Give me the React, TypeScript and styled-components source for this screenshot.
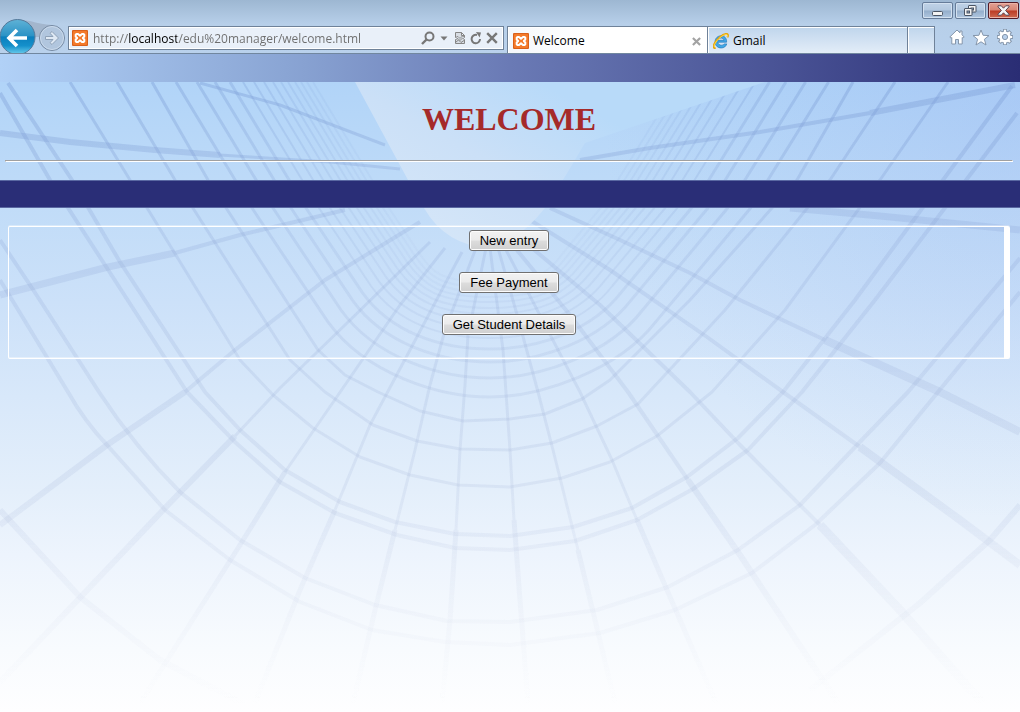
import React from 'react';
import styled, { createGlobalStyle, css } from 'styled-components';

const uiFont = '"Open Sans", "Noto Sans", sans-serif';

const GlobalStyle = createGlobalStyle`
  *, *::before, *::after { box-sizing: border-box; }
  html, body { margin: 0; padding: 0; }
  body { background: #fdfdff; font-family: "Liberation Serif", serif; }
`;

const Window = styled.div`
  display: flex;
  flex-direction: column;
  min-height: 100vh;
`;

/* ---------- browser frame ---------- */

const Frame = styled.header`
  display: flex;
  flex-direction: column;
  background: linear-gradient(#9db7d2 0, #b7cfe9 24px, #b9d1ec 100%);
  border-bottom: 1px solid #71879f;
  font-family: ${uiFont};
`;

const TitleBar = styled.div`
  display: flex;
  justify-content: flex-end;
  gap: 2px;
  height: 19px;
  padding: 2px 1px 0 0;
`;

const WindowButton = styled.button<{ $danger?: boolean }>`
  display: flex;
  align-items: center;
  justify-content: center;
  width: 31px;
  height: 17px;
  padding: 0;
  border: 1px solid ${(p) => (p.$danger ? '#521a26' : '#667c99')};
  border-radius: 2px;
  box-shadow: inset 0 0 0 1px ${(p) => (p.$danger ? '#eab3a8' : '#d3e1f0')};
  background: ${(p) =>
    p.$danger
      ? 'linear-gradient(#e3a194 0, #d88473 48%, #bb3a24 52%, #cd6a50 100%)'
      : 'linear-gradient(#bfd2e7 0, #b3c8df 48%, #94aecb 52%, #b0c7e0 100%)'};
`;

const Toolbar = styled.div`
  display: flex;
  height: 34px;
  overflow: hidden;
`;

const HistoryButtons = styled.nav`
  display: flex;
  width: 68px;
`;

const RoundButton = styled.button`
  padding: 0;
  border: 0;
  background: none;
  line-height: 0;
`;

const BackButton = styled(RoundButton)`
  z-index: 1;
  width: 36px;
  height: 36px;
`;

const ForwardButton = styled(RoundButton)`
  width: 30px;
  height: 34px;
`;

const AddressBar = styled.form`
  display: flex;
  flex: 1;
  align-items: center;
  min-width: 0;
  height: 24px;
  margin: 7px 3px 0 0;
  padding: 0 3px;
  border: 1px solid #6f8299;
  box-shadow: inset 0 0 0 1px #fff;
  background: #e9f0f9;
`;

const AddressInput = styled.input`
  flex: 1;
  min-width: 0;
  height: 20px;
  margin-left: 5px;
  padding: 0;
  border: 0;
  outline: 0;
  font: 12px/16px ${uiFont};
  color: transparent;
  background: linear-gradient(90deg, #6d6d6d 35px, #000 35px, #000 84px, #6d6d6d 84px);
  background-clip: text;
  -webkit-background-clip: text;
`;

const PlainButton = styled.button`
  display: flex;
  align-items: center;
  justify-content: center;
  width: 16px;
  height: 20px;
  padding: 0;
  border: 0;
  background: none;
`;

const TabList = styled.div`
  display: flex;
  height: 27px;
  margin-top: 7px;
  border-top: 1px solid #6f8299;
  border-left: 1px solid #6f8299;
`;

const tabFace = css<{ $active?: boolean }>`
  border: 0;
  border-right: 1px solid #6f8299;
  box-shadow: inset 1px 1px 0 #fff;
  background: ${(p) =>
    p.$active ? 'linear-gradient(90deg, #f4f7fb, #fff 40%)' : 'linear-gradient(#bfd5ec, #e3edf8)'};
`;

const Tab = styled.div<{ $active?: boolean }>`
  display: flex;
  align-items: center;
  width: 200px;
  padding: 2px 3px 0 5px;
  ${tabFace}
`;

const TabLabel = styled.button`
  display: flex;
  flex: 1;
  align-items: center;
  gap: 4px;
  padding: 0;
  border: 0;
  background: none;
  font: 12px/16px ${uiFont};
  color: #000;
`;

const NewTab = styled.button`
  width: 27px;
  padding: 0;
  ${tabFace}
`;

const Tools = styled.div`
  display: flex;
  align-items: center;
  gap: 4px;
  padding: 2px 5px 0 12px;
`;

const ToolButton = styled(PlainButton)`
  width: 20px;
`;

/* ---------- page ---------- */

const Page = styled.div`
  display: grid;
  flex: 1;
  > * { grid-area: 1 / 1; }
`;

const Backdrop = styled.svg`
  display: block;
  width: 100%;
  height: 100%;
  min-height: 0;
`;

const Content = styled.div`
  z-index: 1;
`;

const TopStrip = styled.div`
  height: 28px;
  background: linear-gradient(90deg, #b1d1f7 0, #8aa5d4 28%, #6a7ab5 50%, #4b5597 75%, #2a2d74 100%);
`;

const Heading = styled.div`
  padding: 19px 7px 18px 5px;
`;

const Title = styled.h1`
  margin: 0;
  font: bold 32px/36px "Liberation Serif", serif;
  text-align: center;
  color: #a52a2a;
`;

const Rule = styled.hr`
  height: 2px;
  margin: 23px 0 0;
  border: 1px solid;
  border-color: #a0a0a0 #fff #fff #a0a0a0;
`;

const Band = styled.div`
  height: 28px;
  border: solid #5a68a2;
  border-width: 1px 0;
  background: #2a2e77;
`;

const Menu = styled.main`
  display: flex;
  flex-direction: column;
  align-items: center;
  gap: 21px;
  margin: 18px 10px 0 8px;
  padding: 3px 0 23px 5px;
  border: 1px solid #fff;
  border-right-width: 6px;
  border-radius: 2px;
  box-shadow: 0 -1px 0 rgba(255, 255, 255, 0.35), inset 0 -1px 0 rgba(255, 255, 255, 0.4);
`;

const MenuButton = styled.button`
  height: 21px;
  padding: 0 10px;
  border: 1px solid #707070;
  border-radius: 3px;
  box-shadow: inset 0 0 0 1px #fcfcfc;
  background: linear-gradient(#f2f2f2 0, #ebebeb 49%, #dddddd 51%, #cfcfcf 100%);
  font: 13px/19px "Liberation Sans", Arial, sans-serif;
  color: #000;
`;

/* ---------- icons ---------- */

const XamppIcon = () => (
  <svg width="16" height="16" viewBox="0 0 16 16" aria-hidden="true">
    <rect width="16" height="16" rx="1" fill="#d9601a" />
    <rect x="1" y="1" width="14" height="14" rx="1" fill="#f47a2a" />
    <path
      d="M4.500 4H6L8 5.800 10 4h1.500l.8.8v1.700L10.800 8l1.500 1.500v1.700l-.8.8H10L8 10.200 6 12H4.500l-.8-.8V9.500L5.200 8 3.700 6.500V4.800z"
      fill="none"
      stroke="#fff"
      strokeWidth="2"
      strokeLinejoin="round"
    />
    <path d="M6.500 8h3" stroke="#f47a2a" strokeWidth="1.400" />
  </svg>
);

const ExplorerIcon = () => (
  <svg width="16" height="16" viewBox="0 0 16 16" aria-hidden="true">
    <path
      d="M13.600 9.200H4.900c.2 1.900 1.600 3 3.500 3 1.300 0 2.300-.4 2.900-1.300h2.500C12.900 13.500 11 15 8.300 15 4.700 15 2 12.500 2 8.900 2 5.400 4.600 2.800 8.200 2.800c3.400 0 5.700 2.500 5.400 6.400zM4.900 7.300h6c-.2-1.500-1.300-2.300-2.800-2.300-1.700 0-2.900.8-3.200 2.300z"
      fill="#41a8e6"
      stroke="#1b6fb5"
      strokeWidth=".6"
    />
    <path
      d="M2.600 14.800C.4 15.600 0 13.400 1.700 10.300 4 6 9.400 1.300 13 .9c2.100-.2 2.500 1.400 1.400 3.500"
      fill="none"
      stroke="#e5a50c"
      strokeWidth="1.900"
    />
    <path
      d="M2.200 14.200C.9 14.200.9 12.500 2.100 10.500 4.400 6.400 9.500 1.900 13 1.400c1.500-.1 1.900.9 1.200 2.500"
      fill="none"
      stroke="#ffd84a"
      strokeWidth="1"
    />
  </svg>
);

const BackIcon = () => (
  <svg width="36" height="36" viewBox="0 0 36 36" aria-hidden="true">
    <defs>
      <linearGradient id="backFill" x1="0" y1="0" x2="0" y2="1">
        <stop offset="0" stopColor="#5fb2d6" />
        <stop offset=".46" stopColor="#2c93c6" />
        <stop offset=".5" stopColor="#0b7fbd" />
        <stop offset=".75" stopColor="#1590cb" />
        <stop offset="1" stopColor="#6fd0ee" />
      </linearGradient>
    </defs>
    <circle cx="17.500" cy="18" r="17.500" fill="url(#backFill)" stroke="#56799a" />
    <path d="M27 19H10M17 11l-8 8 8 8" fill="none" stroke="#fff" strokeWidth="3.600" />
  </svg>
);

const ForwardIcon = () => (
  <svg width="30" height="34" viewBox="0 0 30 34" overflow="visible" aria-hidden="true">
    <path d="M-16 1C-4 1 0 5 16 6L4 18H-1z" fill="#a3b6cd" />
    <circle cx="16" cy="19" r="12.500" fill="#b1c6de" stroke="#7488a1" />
    <circle cx="16" cy="19" r="11.500" fill="none" stroke="#cbdbec" />
    <path
      d="M9.500 17.500H17L14 14.300 16 12.500 22.500 19 16 25.500 14 23.700 17 20.500H9.500z"
      fill="#dfe9f4"
      stroke="#8fa2b8"
    />
  </svg>
);

const SearchIcon = () => (
  <svg width="14" height="14" viewBox="0 0 14 14" fill="none" stroke="#777" aria-hidden="true">
    <circle cx="8.500" cy="5.500" r="4" strokeWidth="2" />
    <path d="M5.500 8.500L1 13" strokeWidth="2.400" />
  </svg>
);

const CaretIcon = () => (
  <svg width="8" height="5" viewBox="0 0 8 5" aria-hidden="true">
    <path d="M0.500 0.500h7L4 4.500z" fill="#777" />
  </svg>
);

const CompatibilityIcon = () => (
  <svg width="10" height="12" viewBox="0 0 10 12" fill="none" stroke="#858585" aria-hidden="true">
    <path d="M.5 5.500V.5h6l3 3v2L7.500 4 5 6.500 3 4.500zM6.500.5v3h3M.5 11.500v-4L3 6.500 5 8.500 7.500 6l2 1.500v4z" fill="#d8dde4" />
    <path d="M1 10l2.500-2L6 10.500 9 8.500" />
  </svg>
);

const RefreshIcon = () => (
  <svg width="12" height="13" viewBox="0 0 12 13" aria-hidden="true">
    <path d="M7 3A4.200 4.200 0 1 0 10 7" fill="none" stroke="#777" strokeWidth="2" />
    <path d="M6 0l5 .4L9.600 5.600z" fill="#777" />
  </svg>
);

const CrossIcon = ({ size, color, weight }: { size: number; color: string; weight: number }) => (
  <svg width={size} height={size} viewBox="0 0 10 10" aria-hidden="true">
    <path d="M1 1l8 8M9 1L1 9" stroke={color} strokeWidth={weight} />
  </svg>
);

const HomeIcon = () => (
  <svg width="16" height="16" viewBox="0 0 16 16" aria-hidden="true">
    <path
      d="M8 1L.800 8l1.200 1.200.8-.7V15h3.700v-4.500h3V15h3.700V8.500l.8.7L15.200 8 13 5.800V2h-2v1.900z"
      fill="#fff"
      stroke="#8596ab"
      strokeLinejoin="round"
    />
  </svg>
);

const StarIcon = () => (
  <svg width="18" height="17" viewBox="0 0 18 17" aria-hidden="true">
    <path
      d="M9 1l2.100 5.300 5.900.3-4.600 3.700 1.600 5.700L9 12.800 4 16l1.600-5.700L1 6.600l5.900-.3z"
      fill="#fff"
      stroke="#8596ab"
      strokeLinejoin="round"
    />
  </svg>
);

const GearIcon = () => (
  <svg width="18" height="18" viewBox="0 0 18 18" aria-hidden="true">
    <g stroke="#8596ab" strokeWidth="4">
      <path d="M9 1v16M1 9h16M3.300 3.300l11.400 11.400M14.700 3.300L3.300 14.700" />
    </g>
    <circle cx="9" cy="9" r="6.500" fill="#8596ab" />
    <g stroke="#fff" strokeWidth="2.200">
      <path d="M9 1.800v14.400M1.800 9h14.400M4 4l10 10M14 4L4 14" />
    </g>
    <circle cx="9" cy="9" r="5.600" fill="#fff" />
    <circle cx="9" cy="9" r="2.600" fill="#b9d1ec" stroke="#8596ab" />
  </svg>
);

const MinimizeIcon = () => (
  <svg width="12" height="13" viewBox="0 0 12 13" aria-hidden="true">
    <rect x=".5" y="7.500" width="10" height="4" rx="1" fill="#f3f3f3" stroke="#4b5564" />
  </svg>
);

const RestoreIcon = () => (
  <svg width="13" height="11" viewBox="0 0 13 11" fill="#f3f3f3" stroke="#4b5564" aria-hidden="true">
    <rect x="4.500" y=".5" width="7.500" height="6.500" rx=".5" />
    <rect x="7" y="3" width="2.500" height="2" fill="#90a9c5" />
    <rect x=".5" y="3.500" width="7.500" height="7" rx=".5" />
    <rect x="3" y="6" width="2.500" height="2" fill="#90a9c5" />
  </svg>
);

const CloseIcon = () => (
  <svg width="13" height="11" viewBox="0 0 13 11" aria-hidden="true">
    <path
      d="M1 .8h3.300l2.200 2.400L8.700.8H12v1L8.600 5.500 12 9.200v1H8.700L6.500 7.800 4.300 10.200H1v-1l3.400-3.700L1 1.800z"
      fill="#f5f5f5"
      stroke="#5b4553"
    />
  </svg>
);

/* ---------- glass atrium backdrop ---------- */

/* Hand-placed rings of the glass roof, from the outside in. */
const outerRings = [
  'M0 240 L32 288 L99 392 Q135 447 180 492 L240 540 L305 578 L375 605 L447 621 L510 622 L597 610 L668 587 L738 550 L800 505 L857 445 L908 392 L1020 258',
  'M0 280 L68 392 Q85 422 107 445 L165 510 L230 560 L300 602 L372 630 L445 642 L510 645 L600 633 L675 610 L752 573 L815 525 L880 463 L938 392 L1020 292',
  'M0 93 L50 180 L105 265 L187 392 L235 442 L280 482 L335 513 L397 535 L455 548 L510 550 L575 541 L637 520 L693 489 L748 450 L802 392 L875 300 L1017 113',
  'M8 83 L72 180 L120 262 L205 392 L240 430 L285 470 L340 502 L395 522 L455 534 L510 536 L573 527 L632 508 L687 477 L738 438 L783 392 L855 300 L1012 86',
  'M70 82 L130 180 L240 360 L273 395 L313 428 L360 457 L410 475 L458 485 L510 487 L562 478 L610 462 L657 436 L712 392 L785 310 L880 180 L948 82',
  'M117 82 L175 180 L290 360 L325 392 L373 425 L417 441 L460 449 L510 450 L552 443 L597 426 L638 404 L725 310 L830 180 L895 82',
  'M152 82 L208 180 L318 350 L345 375 L378 392 L420 411 L463 421 L510 419 L545 414 L582 399 L610 380 L690 300 L797 180 L853 82',
];

const edgeRings = [
  'M0 510 L80 597 L160 660 L245 705',
  'M1020 505 L990 540 L920 603 L810 690',
];

/* Inner rings shrink towards the vanishing point: [left x at y 208, lowest y]. */
const innerRings: Array<[number, number]> = [
  [252, 397], [273, 378], [291, 362], [306, 349], [319, 338], [330, 329],
  [340, 321], [349, 314], [357, 308], [364, 302], [371, 297], [377, 292],
  [383, 287], [389, 282],
];

const innerRingPath = ([left, bottom]: [number, number]) => {
  const right = 490 + (490 - left) * 1.095;
  const depth = bottom - 208;
  const bendY = 208 + depth * 0.6;
  const bendLeft = left + depth * 0.4;
  const bendRight = right - depth * 0.5;
  return `M${left - 76} 82 L${left} 208 L${bendLeft} ${bendY} C${bendLeft + depth * 0.2} ${
    208 + depth * 0.88
  } ${440} ${bottom} 490 ${bottom} C540 ${bottom} ${bendRight - depth * 0.2} ${
    208 + depth * 0.86
  } ${bendRight} ${bendY} L${right} 208 L${right + 78} 82`;
};

const beams: Array<[number, string]> = [
  [6, 'M0 133 L70 142 L155 150 L220 155'],
  [3, 'M220 155 L330 162 L400 169'],
  [3, 'M200 83 L280 105 L385 145'],
  [7, 'M0 295 L108 267 L175 253'],
  [4, 'M175 253 L240 235 L345 210'],
  [6, 'M0 525 L107 445 L185 392'],
  [4, 'M185 392 L235 350 L325 280 L420 222'],
  [6, 'M0 682 L165 508 L235 436'],
  [3, 'M235 436 L280 388 L345 325 L430 242'],
  [5, 'M140 703 L240 545 L285 472'],
  [3, 'M285 472 L345 385 L400 305 L445 248'],
  [5, 'M255 703 L300 590 L335 510'],
  [3, 'M335 510 L370 425 L410 350 L462 252'],
  [5, 'M353 703 L375 610 L395 530'],
  [3, 'M395 530 L415 450 L430 385 L445 330 L476 248'],
  [5, 'M442 703 L450 620 L456 530'],
  [3, 'M456 530 L460 450 L465 385 L468 335 L486 248'],
  [5, 'M528 703 L520 600 L514 520'],
  [3, 'M514 520 L510 450 L503 350 L490 248'],
  [5, 'M615 703 L595 620 L578 550'],
  [3, 'M578 550 L553 450 L538 392 L518 318 L498 248'],
  [5, 'M716 703 L667 590 L637 520'],
  [3, 'M637 520 L612 460 L580 392 L545 325 L505 248'],
  [6, 'M838 703 L740 555 L688 480'],
  [4, 'M688 480 L628 392 L570 315 L512 244'],
  [9, 'M982 703 L900 610 L820 525'],
  [4, 'M820 525 L740 445 L690 392 L600 305 L520 238'],
  [8, 'M1020 565 L960 520 L860 447'],
  [4, 'M860 447 L783 392 L707 337 L610 270 L530 220'],
  [8, 'M1020 432 L940 392 L825 340'],
  [4, 'M825 340 L740 300 L690 273 L620 240 L550 208'],
  [7, 'M1020 230 L880 216 L790 208'],
  [6, 'M1015 85 L870 113'],
  [4, 'M870 113 L760 132 L650 148 L580 160'],
];

const AtriumBackdrop = () => (
  <Backdrop viewBox="0 54 1020 658" preserveAspectRatio="none" aria-hidden="true">
    <defs>
      <linearGradient id="sky" x1="0" y1="82" x2="0" y2="712" gradientUnits="userSpaceOnUse">
        <stop offset="0" stopColor="#b1d4f8" />
        <stop offset=".2" stopColor="#c1dcf8" />
        <stop offset=".35" stopColor="#cce1f9" />
        <stop offset=".5" stopColor="#d8e8fa" />
        <stop offset=".65" stopColor="#e4effb" />
        <stop offset=".75" stopColor="#edf4fd" />
        <stop offset=".9" stopColor="#f8fbfe" />
        <stop offset="1" stopColor="#fefeff" />
      </linearGradient>
      <radialGradient id="shade" cx="1020" cy="100" r="420" gradientUnits="userSpaceOnUse">
        <stop offset="0" stopColor="#8fabee" stopOpacity=".26" />
        <stop offset="1" stopColor="#8fb4ee" stopOpacity="0" />
      </radialGradient>
      <linearGradient id="frame" x1="0" y1="82" x2="0" y2="705" gradientUnits="userSpaceOnUse">
        <stop offset="0" stopColor="#7d9fd8" stopOpacity=".42" />
        <stop offset=".25" stopColor="#8ea6d6" stopOpacity=".25" />
        <stop offset=".65" stopColor="#a3b3d6" stopOpacity=".19" />
        <stop offset="1" stopColor="#c5cbe0" stopOpacity="0" />
      </linearGradient>
      <linearGradient id="opening" x1="540" y1="82" x2="450" y2="248" gradientUnits="userSpaceOnUse">
        <stop offset="0" stopColor="#b8daf9" />
        <stop offset=".5" stopColor="#cbe0f7" />
        <stop offset="1" stopColor="#d5e6f8" />
      </linearGradient>
      <filter id="soft" x="0" y="0" width="100%" height="100%">
        <feGaussianBlur stdDeviation=".7" />
      </filter>
    </defs>
    <rect y="54" width="1020" height="658" fill="url(#sky)" />
    <rect y="54" width="1020" height="658" fill="url(#shade)" />
    <g fill="none" stroke="url(#frame)" strokeLinejoin="round" filter="url(#soft)">
      {outerRings.map((d, i) => (
        <path key={d} d={d} strokeWidth={i < 4 ? 4 : 3} />
      ))}
      {edgeRings.map((d) => (
        <path key={d} d={d} strokeWidth={6} />
      ))}
      {innerRings.map((ring, i) => (
        <path
          key={ring[0]}
          d={innerRingPath(ring)}
          strokeWidth={i < 4 ? 3 : 2}
          opacity={0.95 - i * 0.05}
        />
      ))}
      {beams.map(([width, d]) => (
        <path key={d} d={d} strokeWidth={width} />
      ))}
    </g>
    <path
      d="M355 82 L408 180 L424 208 Q446 246 490 248 Q520 240 545 208 L566 175 L585 143 L765 82z"
      fill="url(#opening)"
    />
  </Backdrop>
);

export default function App() {
  return (
    <Window>
      <GlobalStyle />
      <Frame>
        <TitleBar>
          <WindowButton aria-label="Minimize"><MinimizeIcon /></WindowButton>
          <WindowButton aria-label="Restore"><RestoreIcon /></WindowButton>
          <WindowButton $danger aria-label="Close window"><CloseIcon /></WindowButton>
        </TitleBar>
        <Toolbar>
          <HistoryButtons aria-label="History">
            <BackButton aria-label="Back"><BackIcon /></BackButton>
            <ForwardButton aria-label="Forward"><ForwardIcon /></ForwardButton>
          </HistoryButtons>
          <AddressBar onSubmit={(e) => e.preventDefault()}>
            <XamppIcon />
            <AddressInput
              aria-label="Address"
              spellCheck={false}
              defaultValue="http://localhost/edu%20manager/welcome.html"
            />
            <PlainButton type="button" aria-label="Search"><SearchIcon /></PlainButton>
            <PlainButton type="button" aria-label="Show address list"><CaretIcon /></PlainButton>
            <PlainButton type="button" aria-label="Compatibility view"><CompatibilityIcon /></PlainButton>
            <PlainButton type="button" aria-label="Refresh"><RefreshIcon /></PlainButton>
            <PlainButton type="button" aria-label="Stop">
              <CrossIcon size={12} color="#777" weight={2} />
            </PlainButton>
          </AddressBar>
          <TabList>
            <Tab $active>
              <TabLabel><XamppIcon />Welcome</TabLabel>
              <PlainButton aria-label="Close tab">
                <CrossIcon size={9} color="#a3a3a3" weight={2.4} />
              </PlainButton>
            </Tab>
            <Tab>
              <TabLabel><ExplorerIcon />Gmail</TabLabel>
            </Tab>
            <NewTab aria-label="New tab" />
          </TabList>
          <Tools>
            <ToolButton aria-label="Home"><HomeIcon /></ToolButton>
            <ToolButton aria-label="Favorites"><StarIcon /></ToolButton>
            <ToolButton aria-label="Settings"><GearIcon /></ToolButton>
          </Tools>
        </Toolbar>
      </Frame>
      <Page>
        <AtriumBackdrop />
        <Content>
          <TopStrip />
          <Heading>
            <Title>WELCOME</Title>
            <Rule />
          </Heading>
          <Band />
          <Menu>
            <MenuButton>New entry</MenuButton>
            <MenuButton>Fee Payment</MenuButton>
            <MenuButton>Get Student Details</MenuButton>
          </Menu>
        </Content>
      </Page>
    </Window>
  );
}
